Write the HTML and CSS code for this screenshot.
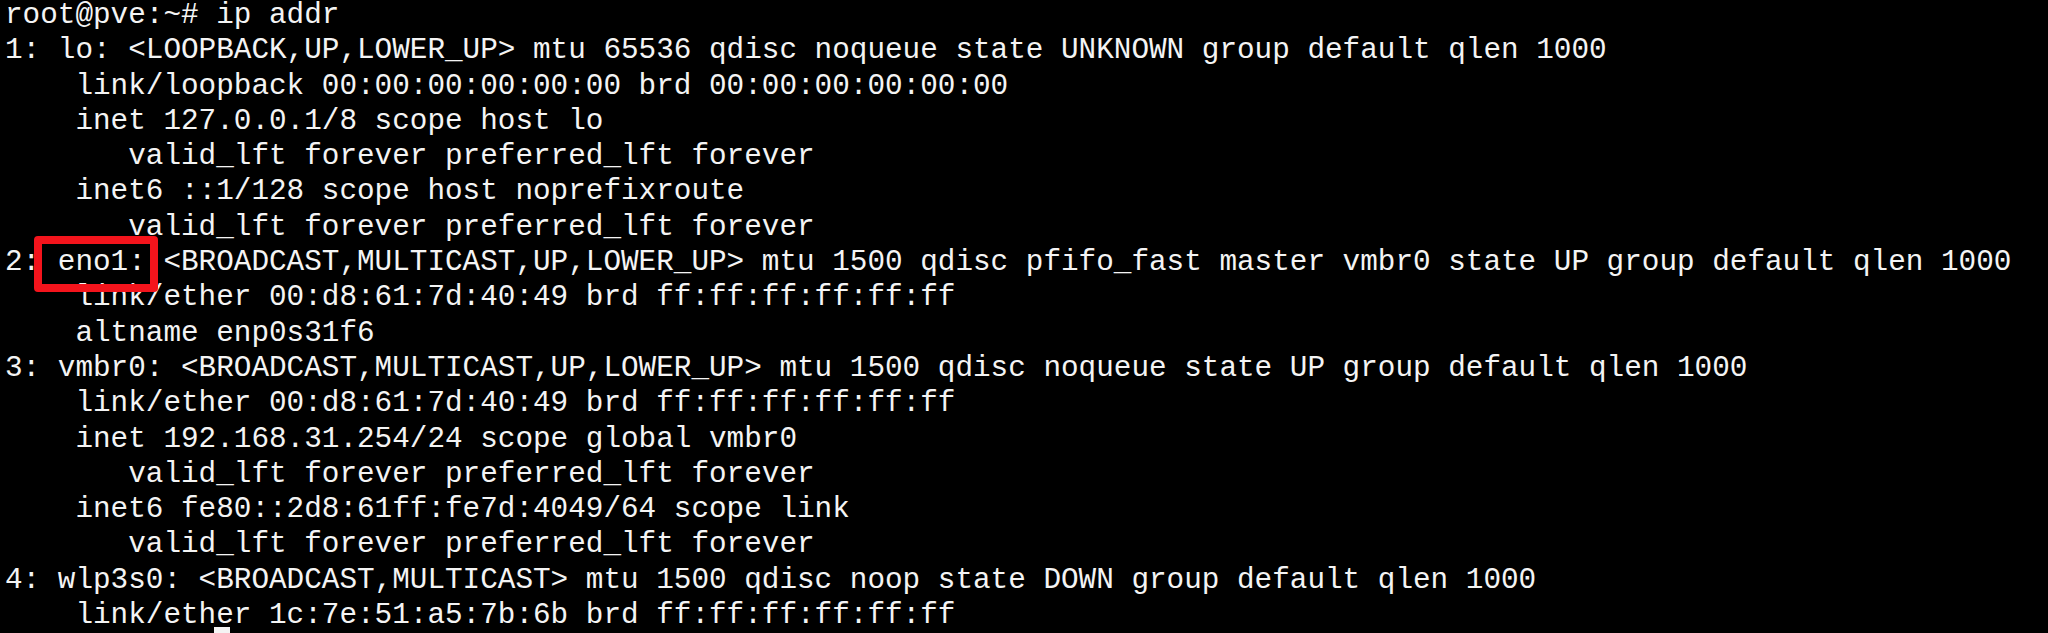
FILE: index.html
```html
<!DOCTYPE html>
<html lang="en">
<head>
<meta charset="utf-8">
<title>ip addr</title>
<link rel="stylesheet" href="styles.css">
</head>
<body>
<div class="screen">
<pre class="term">root@pve:~# ip addr
1: lo: &lt;LOOPBACK,UP,LOWER_UP&gt; mtu 65536 qdisc noqueue state UNKNOWN group default qlen 1000
    link/loopback 00:00:00:00:00:00 brd 00:00:00:00:00:00
    inet 127.0.0.1/8 scope host lo
       valid_lft forever preferred_lft forever
    inet6 ::1/128 scope host noprefixroute
       valid_lft forever preferred_lft forever
2: <span class="hl">eno1:</span> &lt;BROADCAST,MULTICAST,UP,LOWER_UP&gt; mtu 1500 qdisc pfifo_fast master vmbr0 state UP group default qlen 1000
    link/ether 00:d8:61:7d:40:49 brd ff:ff:ff:ff:ff:ff
    altname enp0s31f6
3: vmbr0: &lt;BROADCAST,MULTICAST,UP,LOWER_UP&gt; mtu 1500 qdisc noqueue state UP group default qlen 1000
    link/ether 00:d8:61:7d:40:49 brd ff:ff:ff:ff:ff:ff
    inet 192.168.31.254/24 scope global vmbr0
       valid_lft forever preferred_lft forever
    inet6 fe80::2d8:61ff:fe7d:4049/64 scope link
       valid_lft forever preferred_lft forever
4: wlp3s0: &lt;BROADCAST,MULTICAST&gt; mtu 1500 qdisc noop state DOWN group default qlen 1000
    link/ether 1c:7e:51:a5:7b:6b brd ff:ff:ff:ff:ff:ff</pre>
<div class="cursor"></div>
</div>
</body>
</html>
```
FILE: styles.css
```css
html {
  background: #000;
  overflow: hidden;
}

body {
  margin: 0;
  padding: 0;
  background: #000;
}

.screen {
  height: 633px;
  padding-top: 1px;
  box-sizing: border-box;
  overflow: hidden;
  display: flex;
  flex-direction: column;
  align-items: flex-start;
}

.term {
  margin: -3px 0 0 0;
  padding: 0 0 0 5px;
  font-family: "Liberation Mono", "Courier New", monospace;
  font-size: 29.33px;
  line-height: 35.3px;
  color: #f4f4f4;
  white-space: pre;
  flex: none;
}

.hl {
  position: relative;
}

.hl::after {
  content: "";
  position: absolute;
  left: -24px;
  right: -12px;
  top: -10px;
  bottom: -13px;
  border: 8px solid #f4141c;
  border-radius: 4px;
}

.cursor {
  flex: none;
  margin: -6px 0 0 214px;
  width: 16px;
  height: 30px;
  background: #f4f4f4;
}
```
